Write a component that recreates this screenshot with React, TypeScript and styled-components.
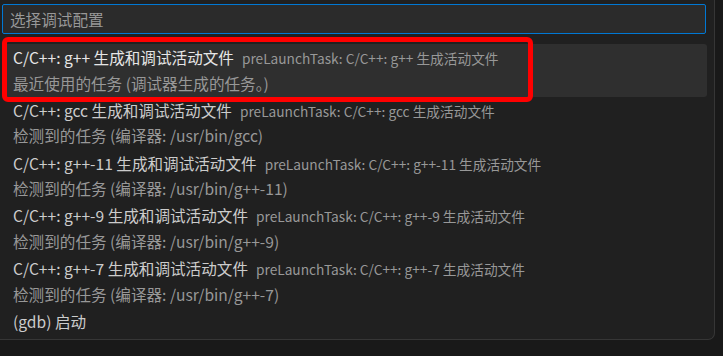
import React, { ReactElement } from 'react'
import styled, { createGlobalStyle } from 'styled-components'

const GlobalStyle = createGlobalStyle`
    html, body {
        margin: 0;
        padding: 0;
        background: #191919;
    }
`

const Page = styled.div`
    width: 723px;
    height: 356px;
    overflow: hidden;
    background: #191919;
    display: flex;
    font-family: "Noto Sans CJK SC", "Noto Sans", sans-serif;
`
const Panel = styled.div`
    box-sizing: border-box;
    margin-left: -10px;
    width: 725px;
    height: 340px;
    padding: 4px 8px 0 11px;
    background: #202020;
    border: 1px solid #363636;
    border-top: none;
    border-radius: 0 0 7px 7px;
    display: flex;
    flex-direction: column;
`
const SearchBox = styled.input`
    box-sizing: border-box;
    width: 100%;
    height: 30px;
    margin: 0;
    padding: 0 7px;
    background: #2b2b2b;
    border: 1px solid #0078d4;
    border-radius: 2px;
    outline: none;
    color: #cccccc;
    font-family: inherit;
    font-size: 15.6px;

    &::placeholder {
        color: #989898;
    }
`
const List = styled.div`
    margin-top: 10px;
    margin-right: -1px;
    display: flex;
    flex-direction: column;
`
const Row = styled.div<{ $selected?: boolean; $tall: boolean }>`
    position: relative;
    box-sizing: border-box;
    height: ${p => (p.$tall ? '52.8px' : '26.4px')};
    padding-left: 11px;
    padding-top: 1px;
    border-radius: 3px;
    background: ${p => (p.$selected ? '#2f2f2f' : 'transparent')};
    display: flex;
    flex-direction: column;
`
const Line = styled.div`
    height: 25.6px;
    line-height: 25.6px;
    white-space: nowrap;
    font-size: 15.6px;
`
const Label = styled.span<{ $selected?: boolean }>`
    color: ${p => (p.$selected ? '#e6e6e6' : '#cccccc')};
`
const Description = styled.span`
    margin-left: 8px;
    font-size: 13.7px;
    color: #989898;
`
const Detail = styled(Line)`
    color: #989898;
`
// red annotation drawn over the screenshot
const Marker = styled.div`
    position: absolute;
    top: -7px;
    left: 0;
    width: 531px;
    height: 65px;
    box-sizing: border-box;
    border: 5px solid #ff0000;
    border-radius: 6px;
    pointer-events: none;
`

type Item = {
    label: string
    description?: string
    detail?: string
    selected?: boolean
}

const items: Item[] = [
    {
        label: 'C/C++: g++ 生成和调试活动文件',
        description: 'preLaunchTask: C/C++: g++ 生成活动文件',
        detail: '最近使用的任务 (调试器生成的任务。)',
        selected: true,
    },
    {
        label: 'C/C++: gcc 生成和调试活动文件',
        description: 'preLaunchTask: C/C++: gcc 生成活动文件',
        detail: '检测到的任务 (编译器: /usr/bin/gcc)',
    },
    {
        label: 'C/C++: g++-11 生成和调试活动文件',
        description: 'preLaunchTask: C/C++: g++-11 生成活动文件',
        detail: '检测到的任务 (编译器: /usr/bin/g++-11)',
    },
    {
        label: 'C/C++: g++-9 生成和调试活动文件',
        description: 'preLaunchTask: C/C++: g++-9 生成活动文件',
        detail: '检测到的任务 (编译器: /usr/bin/g++-9)',
    },
    {
        label: 'C/C++: g++-7 生成和调试活动文件',
        description: 'preLaunchTask: C/C++: g++-7 生成活动文件',
        detail: '检测到的任务 (编译器: /usr/bin/g++-7)',
    },
    { label: '(gdb) 启动' },
]

export default function App(): ReactElement {
    return (
        <Page>
            <GlobalStyle />
            <Panel>
                <SearchBox placeholder="选择调试配置" readOnly />
                <List>
                    {items.map(item => (
                        <Row key={item.label} $selected={item.selected} $tall={!!item.detail}>
                            <Line>
                                <Label $selected={item.selected}>{item.label}</Label>
                                {item.description && <Description>{item.description}</Description>}
                            </Line>
                            {item.detail && <Detail>{item.detail}</Detail>}
                            {item.selected && <Marker />}
                        </Row>
                    ))}
                </List>
            </Panel>
        </Page>
    )
}
